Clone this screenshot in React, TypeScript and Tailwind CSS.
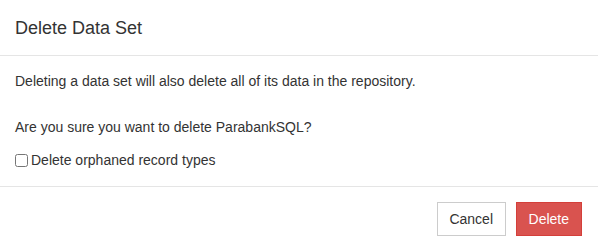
import { useState } from "react";

export default function App() {
  const [orphans, setOrphans] = useState(false);

  return (
    <div className="w-[598px] h-[251px] bg-white text-[#333] text-[14px] leading-[20px] font-['Liberation_Sans',Arial,sans-serif]">
      {/* Header */}
      <div className="px-[15px] pt-[15px] pb-[14px] border-b border-[#e5e5e5]">
        <h4 className="text-[18px] leading-[26px] font-normal">Delete Data Set</h4>
      </div>

      {/* Body */}
      <div className="px-[15px] pt-[15px] pb-[16px]">
        <p className="mb-[26px]">Deleting a data set will also delete all of its data in the repository.</p>
        <p className="mb-[13px]">Are you sure you want to delete ParabankSQL?</p>
        <label className="flex items-center gap-[3px] cursor-pointer">
          <input
            type="checkbox"
            checked={orphans}
            onChange={(e) => setOrphans(e.target.checked)}
            className="w-[13px] h-[13px] m-0"
          />
          <span>Delete orphaned record types</span>
        </label>
      </div>

      {/* Footer */}
      <div className="flex justify-end gap-[10px] px-[16px] pt-[15px] pb-[15px] border-t border-[#e5e5e5]">
        <button className="h-[34px] px-[11.5px] border border-[#ccc] bg-white text-[#333] rounded-none">
          Cancel
        </button>
        <button className="h-[34px] px-[12px] border border-[#d43f3a] bg-[#d9534f] text-white rounded-none">
          Delete
        </button>
      </div>
    </div>
  );
}
